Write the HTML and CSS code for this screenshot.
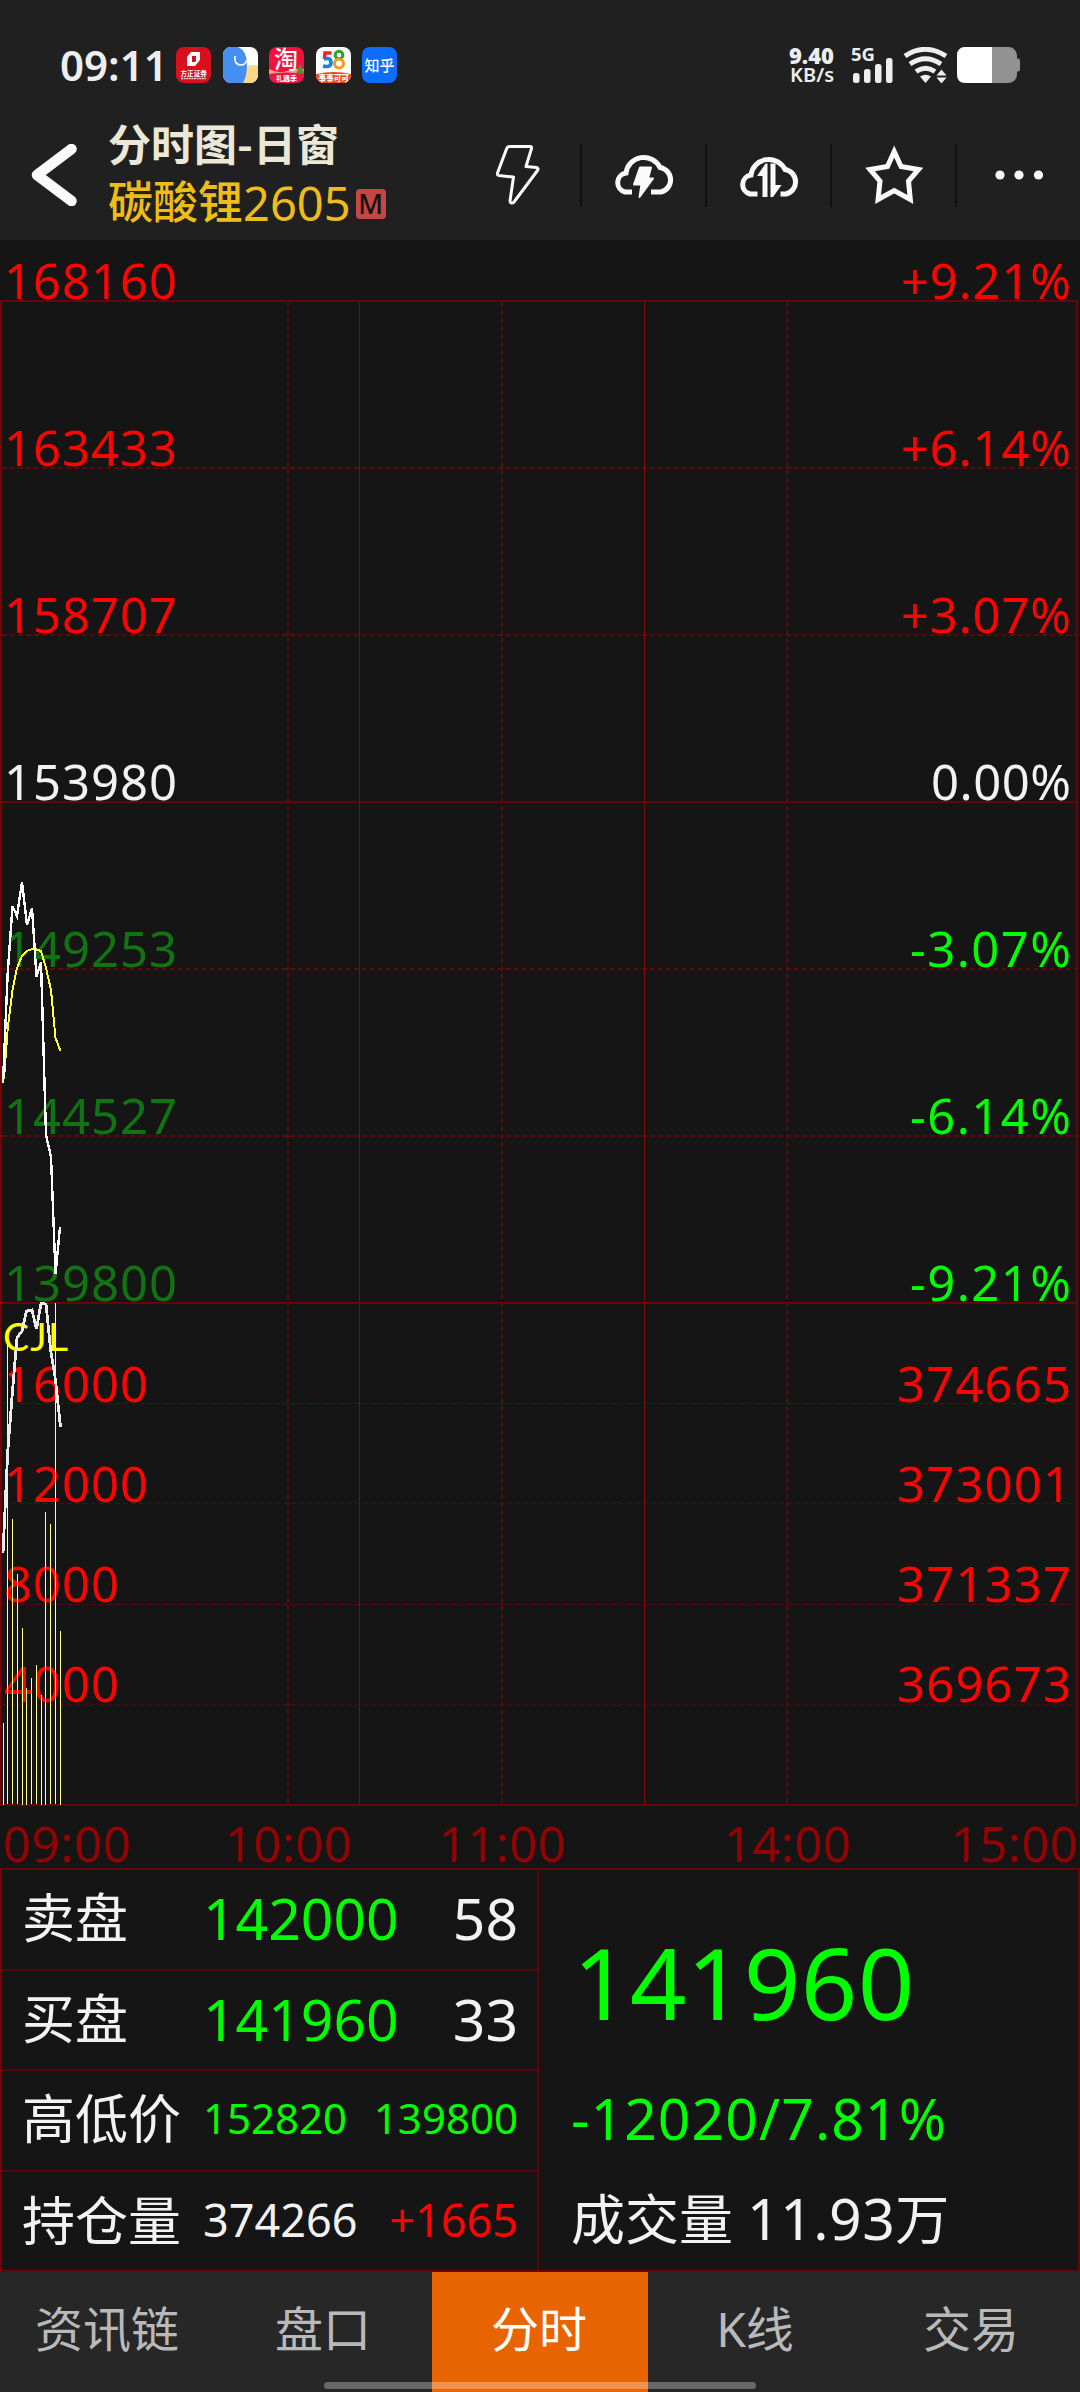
FILE: index.html
```html
<!DOCTYPE html>
<html lang="zh-CN">

<head>
    <meta charset="utf-8">
    <title>分时图-日窗</title>
    <link rel="stylesheet" href="styles.css">
</head>

<body>
    <div class="statusBar">
        <span class="clock">09:11</span>
        <div class="apps">
            <svg viewBox="0 0 35 36">
                <rect width="35" height="36" rx="8" fill="#d80f1c"/>
                <path d="M15 5h9v8l-5 6h-8V10zM16 9v6h3l1-1V9z" fill="#fff" fill-rule="evenodd"/>
                <text x="4.500" y="28.500" font-size="6.600" font-weight="700" fill="#fff">方正证券</text>
                <path d="M5 31.500h25" stroke="#fff" stroke-width="1.500" stroke-dasharray="2 .6" opacity=".8"/>
            </svg>
            <svg viewBox="0 0 35 36">
                <defs><clipPath id="r"><rect width="35" height="36" rx="8"/></clipPath></defs>
                <g clip-path="url(#r)">
                    <rect width="35" height="36" fill="#fff"/>
                    <circle cx="30" cy="31" r="13" fill="#fbd78b"/>
                    <path d="M0 0h15q9 4 9 17q0 12-4 19H0z" fill="#458ff0"/>
                    <path d="M12 9v4q1 5 6 5q4 0 6-5" fill="none" stroke="#fff" stroke-width="1.600"/>
                </g>
            </svg>
            <svg viewBox="0 0 35 36">
                <g clip-path="url(#r)">
                    <rect width="35" height="36" fill="#f5103f"/>
                    <path d="M0 22q10 5 18 2t17-2v6H0z" fill="#f0a070"/>
                    <path d="M31 17l5 10h-9z" fill="#5b8c35"/>
                    <path d="M0 27q18-3 35 0v9H0z" fill="#e8174c"/>
                    <text x="5" y="21" font-size="24" font-weight="500" fill="#fff">淘</text>
                    <text x="7" y="34" font-size="7" font-weight="700" fill="#fff">礼遇季</text>
                </g>
            </svg>
            <svg viewBox="0 0 35 36">
                <g clip-path="url(#r)">
                    <rect width="35" height="36" fill="#fff"/>
                    <path d="M0 27q18-4 35 0v9H0z" fill="#f04a1c"/>
                    <path d="M15.500 6H9l-.5 6" fill="none" stroke="#e5252a" stroke-width="3.600"/>
                    <path d="M8 12q7-2 7 3.500T7 19" fill="none" stroke="#1d7fd8" stroke-width="3.600"/>
                    <circle cx="23" cy="8" r="3.800" fill="none" stroke="#26a52c" stroke-width="3"/>
                    <circle cx="23" cy="16.500" r="4.500" fill="none" stroke="#f59a1c" stroke-width="3"/>
                    <text x="2.500" y="33.500" font-size="7.600" font-weight="900" fill="#fff">事事可可</text>
                </g>
            </svg>
            <svg viewBox="0 0 35 36">
                <rect width="35" height="36" rx="8" fill="#0c6dff"/>
                <text x="2.500" y="23.500" font-size="15" font-weight="500" fill="#fff">知乎</text>
            </svg>
        </div>
        <div class="netSpeed"><b>9.40</b><span>KB/s</span></div>
        <svg class="signal" viewBox="0 0 42 36">
            <text x="0" y="14" font-size="18.500" font-weight="700" fill="#eee">5G</text>
            <g fill="#eee">
                <rect x="2" y="26" width="6.500" height="10" rx="2.500"/>
                <rect x="13" y="22" width="6.500" height="14" rx="2.500"/>
                <rect x="24" y="17" width="6.500" height="19" rx="2.500"/>
                <rect x="35" y="11" width="6.500" height="25" rx="2.500"/>
            </g>
        </svg>
        <svg class="wifi" viewBox="0 0 46 36">
            <g fill="none" stroke="#eee" stroke-width="4.800">
                <path d="M2 9q20-13.500 41 0"/>
                <path d="M7 17q15.500-10.500 31 0"/>
                <path d="M13 24.500q9.500-6.500 19 0"/>
            </g>
            <path d="M17 29.500q5.500-3.500 11 0l-5.500 6.500zM33.500 28.500l5-6 5 6zM33.500 30.500l5 6 5-6z" fill="#eee"/>
        </svg>
        <svg class="battery" viewBox="0 0 63 36">
            <rect width="60" height="36" rx="8.500" fill="#929292"/>
            <rect x="58" y="11.500" width="5" height="13" rx="2" fill="#929292"/>
            <path d="M8.500 0H35v36H8.500Q0 36 0 27.500v-19Q0 0 8.500 0z" fill="#fff"/>
        </svg>
    </div>

    <div class="header">
        <svg class="back" viewBox="0 0 46 62">
            <path d="M40.500 5L6 31l34.500 26" fill="none" stroke="#fafafa" stroke-width="10.500" stroke-linecap="round" stroke-linejoin="round"/>
        </svg>
        <div class="title">
            <div class="windowName">分时图-日窗</div>
            <div class="contract">碳酸锂<span class="code">2605</span><span class="mark">M</span></div>
        </div>
        <div class="actions">
            <div class="action">
                <svg viewBox="0 0 70 66">
                    <path d="M26.500 4.500H47q2 0 1.500 2L43 24.500l10.500 1q2.500 1 1 3L31 60q-3 2.500-4-1l3.500-24L16 33.500q-2-.5-1.500-2.500l9-24q1-2.500 3-2.500z" fill="none" stroke="#fafafa" stroke-width="3" stroke-linejoin="round"/>
                </svg>
            </div>
            <div class="action">
                <svg viewBox="0 0 70 66">
                    <path d="M23 50h-7A9.700 9.700 0 0 1 17 31A18 18 0 0 1 51 25.500A12.500 12.500 0 0 1 52 50H42" fill="none" stroke="#fafafa" stroke-width="5"/>
                    <path d="M31 25.500h11l-3 11h5L30.500 55l2-12.500H25z" fill="#fafafa" stroke="#fafafa" stroke-width="2" stroke-linejoin="round"/>
                </svg>
            </div>
            <div class="action">
                <svg viewBox="0 0 70 66">
                    <path d="M23.500 52H16A9.700 9.700 0 0 1 17 33A18 18 0 0 1 51 27.500A12.500 12.500 0 0 1 52 52H46.500" fill="none" stroke="#fafafa" stroke-width="5"/>
                    <path d="M33.500 55h-5V34H23l8.500-12.500h2zM36.500 21.500h5v21.500h6L39 55h-2.500z" fill="#fafafa"/>
                </svg>
            </div>
            <div class="action">
                <svg viewBox="0 0 70 66">
                    <path d="M35.200 9.500L42 24.500l17.500 3L49.500 39l1.800 18.500-16.100-9-16.100 9L21 39 11 27.500l17.500-3z" fill="none" stroke="#fafafa" stroke-width="5"/>
                </svg>
            </div>
            <div class="action">
                <svg viewBox="0 0 70 66">
                    <g fill="#fafafa"><circle cx="16" cy="33" r="4.600"/><circle cx="35" cy="33" r="4.600"/><circle cx="54.500" cy="33" r="4.600"/></g>
                </svg>
            </div>
        </div>
    </div>

    <!-- y 坐标从标题栏下沿 (240) 算起 -->
    <svg class="chart" viewBox="0 240 1080 1628">
        <g class="dash">
            <path d="M2 468H1077M2 635H1077M2 969H1077M2 1136H1077"/>
            <path d="M288 302V1804M502 302V1804M787 302V1804"/>
        </g>
        <path class="dash thin" d="M3 1403.500H1077M3 1503.500H1077M3 1604.500H1077M3 1704.500H1077"/>
        <path class="frame thin" d="M359.500 302V1804M644.500 302V1804"/>
        <path class="frame" d="M0 301H1078M0 802H1077M0 1303H1077M0 1805H1078M1077 301V1805"/>
        <path class="frame left" d="M1 301V1805"/>

        <g class="red">
            <text x="4" y="299" textLength="173">168160</text>
            <text x="4" y="466" textLength="173">163433</text>
            <text x="4" y="633" textLength="173">158707</text>
        </g>
        <text class="white" x="4" y="800" textLength="173">153980</text>
        <g class="darkGreen">
            <text x="4" y="967" textLength="173">149253</text>
            <text x="4" y="1134" textLength="173">144527</text>
            <text x="4" y="1301" textLength="173">139800</text>
        </g>
        <g class="right red">
            <text x="1071" y="299" textLength="170">+9.21%</text>
            <text x="1071" y="466" textLength="170">+6.14%</text>
            <text x="1071" y="633" textLength="170">+3.07%</text>
        </g>
        <text class="right white" x="1071" y="800" textLength="140">0.00%</text>
        <g class="right green">
            <text x="1071" y="967" textLength="161">-3.07%</text>
            <text x="1071" y="1134" textLength="161">-6.14%</text>
            <text x="1071" y="1301" textLength="161">-9.21%</text>
        </g>

        <text class="indicator" x="3" y="1351" textLength="65">CJL</text>
        <g class="red">
            <text x="4" y="1401.500" textLength="144">16000</text>
            <text x="4" y="1501.500" textLength="144">12000</text>
            <text x="4" y="1601.500" textLength="115">8000</text>
            <text x="4" y="1701.500" textLength="115">4000</text>
        </g>
        <g class="right red">
            <text x="1071" y="1401.500" textLength="174">374665</text>
            <text x="1071" y="1501.500" textLength="174">373001</text>
            <text x="1071" y="1601.500" textLength="174">371337</text>
            <text x="1071" y="1701.500" textLength="174">369673</text>
        </g>

        <path class="volume" d="M3.500 1723V1805M7.500 1345V1804M12.500 1519V1804M17.500 1574V1804M22.500 1628V1805M26.500 1688V1805M31.500 1678V1804M36.500 1665V1804M41.500 1695V1805M45.500 1512V1805M50.500 1524V1804M55.500 1303V1804M60.500 1631V1805"/>
        <polyline class="average" points="4,1079 7.700,1029 12.500,990 17,968 22,956 27,951 32,949 36.500,949.500 41,951 46,968 51,990 55.500,1038 60.500,1051"/>
        <polyline class="price" points="3,1083 7.700,973 12.500,906 17,916 22,882 27,925 32,908 36.500,977 41,962 46,1135 51,1157 55.500,1274 60,1227"/>
        <polyline class="price openInterest" points="3,1553 7.700,1452 12.500,1391 17,1338 22,1331 26.500,1311 32,1310 36.500,1329 41,1303.500 46,1304 50.500,1349 55.500,1380 60.500,1427"/>

        <g class="time">
            <text x="3" y="1862" textLength="128">09:00</text>
            <text x="225" y="1862" textLength="127">10:00</text>
            <text x="439" y="1862" textLength="127">11:00</text>
            <text x="724" y="1862" textLength="127">14:00</text>
            <text x="951" y="1862" textLength="127">15:00</text>
        </g>
    </svg>

    <div class="quote">
        <div class="book">
            <div class="row"><span class="label">卖盘</span><span class="num green">142000</span><span class="num last">58</span></div>
            <div class="row"><span class="label">买盘</span><span class="num green">141960</span><span class="num last">33</span></div>
            <div class="row small"><span class="label">高低价</span><span class="num green">152820</span><span class="num last green">139800</span></div>
            <div class="row mid"><span class="label">持仓量</span><span class="num">374266</span><span class="num last red">+1665</span></div>
        </div>
        <div class="summary">
            <div class="now">141960</div>
            <div class="change">-12020/7.81%</div>
            <div class="amount">成交量 <span>11.93</span>万</div>
        </div>
    </div>

    <div class="nav">
        <a href="#">资讯链</a>
        <a href="#">盘口</a>
        <a href="#" class="active">分时</a>
        <a href="#">K线</a>
        <a href="#">交易</a>
        <div class="homeBar"></div>
    </div>
</body>

</html>
```
FILE: styles.css
```css
* {
    box-sizing: border-box;
}

body {
    margin: 0;
    width: 1080px;
    height: 2392px;
    overflow: hidden;
    display: flex;
    flex-direction: column;
    background: #151515;
    color: #f2f2f2;
    font-family: "Noto Sans", "Noto Sans CJK SC", sans-serif;
}

svg {
    display: block;
    flex: none;
}

.statusBar {
    height: 110px;
    padding: 20px 60px 0 60px;
    display: flex;
    align-items: center;
    background: #202020;
}

.clock {
    width: 116px;
    font-size: 42px;
    font-weight: 600;
    line-height: 40px;
    color: #eee;
}

.apps {
    display: flex;
    gap: 11.600px;
}

.apps svg {
    width: 35px;
    height: 36px;
}

.netSpeed {
    margin-left: auto;
    margin-right: 17px;
    display: flex;
    flex-direction: column;
    align-items: flex-end;
    font-size: 22px;
    font-weight: 700;
    line-height: 20px;
    color: #eee;
}

.netSpeed span {
    font-size: 20px;
    font-weight: 600;
}

.signal {
    width: 42px;
    height: 36px;
    margin-right: 10px;
}

.wifi {
    width: 46px;
    height: 36px;
    margin-right: 8px;
}

.battery {
    width: 63px;
    height: 36px;
}

.header {
    height: 130px;
    padding-left: 31px;
    display: flex;
    align-items: center;
    background: #202020;
}

.back {
    width: 46px;
    height: 62px;
    margin-right: 31px;
}

.title {
    width: 350px;
    height: 130px;
    padding-top: 4px;
}

.windowName {
    font-family: "Noto Sans CJK SC", sans-serif;
    font-size: 43px;
    font-weight: 700;
    line-height: 56px;
    color: #ece8d8;
}

.contract {
    display: flex;
    align-items: center;
    font-size: 45px;
    font-weight: 500;
    line-height: 62px;
    color: #eebd17;
}

.code {
    font-size: 47px;
    font-weight: 400;
    margin-top: 2px;
}

.mark {
    width: 30px;
    height: 30px;
    margin-left: 5px;
    margin-top: 4px;
    border-radius: 4px;
    background: #c44645;
    color: #111;
    font-size: 27px;
    line-height: 30px;
    text-align: center;
}

.actions {
    display: flex;
}

.action {
    width: 125px;
    height: 63px;
    display: flex;
    align-items: center;
    justify-content: center;
    border-left: 2px solid #111;
}

.action:first-child {
    border-left: none;
}

.action svg {
    width: 70px;
    height: 66px;
}

.chart {
    width: 1080px;
    height: 1628px;
    font-size: 49px;
}

.chart path,
.chart polyline {
    fill: none;
}

.frame {
    stroke: #660505;
    stroke-width: 2;
}

.frame.left {
    stroke: #780000;
}

.dash {
    stroke: #560e0e;
    stroke-width: 2;
    stroke-dasharray: 5 3;
}

.frame.thin {
    stroke: #7e0c0c;
    stroke-width: 1;
}

.dash.thin {
    stroke: #5c0808;
    stroke-width: 1;
}

.red {
    fill: #ff0202;
    color: #ff0202;
}

.white {
    fill: #f2f2f2;
}

.green {
    fill: #0f0;
    color: #0f0;
}

.darkGreen {
    fill: #127312;
}

.right {
    text-anchor: end;
}

.indicator {
    font-family: Lato, sans-serif;
    font-size: 39px;
    fill: #ff0;
}

.chart .volume {
    stroke: #ffff90;
    stroke-width: 1;
}

.chart .average {
    stroke: #ff3;
    stroke-width: 2;
    shape-rendering: crispEdges;
}

.chart .price {
    stroke: #fff;
    stroke-width: 2.400;
    shape-rendering: crispEdges;
}

.chart .openInterest {
    stroke: #ececec;
    stroke-width: 2.800;
}

.time {
    fill: #930303;
}

.quote {
    height: 404px;
    display: flex;
    border: 2px solid #640606;
    border-left-color: #780000;
}

.book {
    width: 537px;
    border-right: 2px solid #5c0606;
}

.row {
    height: 100.500px;
    padding: 0 19px 2px 20px;
    display: flex;
    align-items: center;
    border-bottom: 2px solid #560808;
}

.row:last-child {
    border-bottom: none;
}

.label {
    width: 181px;
    padding-bottom: 5px;
    font-size: 53px;
}

.num {
    font-size: 57px;
}

.last {
    margin-left: auto;
}

.small .num {
    padding-bottom: 3px;
    font-size: 42px;
}

.mid .num {
    padding-bottom: 3px;
    font-size: 45px;
}

.summary {
    padding: 42px 0 0 32px;
}

.now {
    padding-left: 2px;
    font-size: 99px;
    line-height: 140px;
    letter-spacing: 0.3px;
    color: #0f0;
}

.change {
    margin-top: 16px;
    font-size: 57px;
    line-height: 100px;
    letter-spacing: 1.100px;
    color: #0f0;
}

.amount {
    font-size: 54px;
    line-height: 100px;
}

.amount span {
    font-size: 57px;
    letter-spacing: 0.5px;
}

.nav {
    position: relative;
    height: 120px;
    display: flex;
    background: #272727;
}

.nav a {
    flex: 1;
    padding-right: 2px;
    padding-bottom: 13px;
    display: flex;
    align-items: center;
    justify-content: center;
    font-size: 48px;
    color: #b9b9b9;
    text-decoration: none;
}

.nav .active {
    background: #e86400;
    color: #fff;
}

.homeBar {
    position: absolute;
    left: 324px;
    bottom: 3px;
    width: 432px;
    height: 7px;
    border-radius: 4px;
    background: rgba(255, 255, 255, 0.3);
}
```
